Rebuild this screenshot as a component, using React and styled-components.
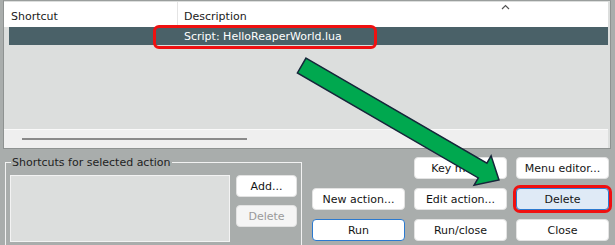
import React from 'react';
import styled, { createGlobalStyle } from 'styled-components';

const Global = createGlobalStyle`
  html, body {
    margin: 0;
    padding: 0;
    background: #a9adac;
    font-family: "DejaVu Sans", Verdana, sans-serif;
    font-size: 11px;
    color: #111;
  }
`;

const Page = styled.div`
  width: 615px;
  height: 245px;
  overflow: hidden;
  position: relative;
  display: flex;
  flex-direction: column;
`;

const ListPanel = styled.div`
  flex-shrink: 0;
  margin: 0 4px 0 3px;
  height: 149px;
  box-sizing: border-box;
  border: 1px solid #8e9291;
  border-top-color: #9a9e9d;
  background: #dcdedd;
  padding: 1px 2px 0 0;
  display: flex;
  flex-direction: column;
`;

const Header = styled.div`
  height: 25px;
  background: #fff;
  display: flex;
  align-items: stretch;
`;

const HeadCell = styled.div`
  position: relative;
  width: ${p => p.$w}px;
  padding-left: ${p => p.$pad}px;
  box-sizing: border-box;
  display: flex;
  align-items: center;
  padding-top: 4px;
  border-right: ${p => (p.$divider ? '1px solid #e4e4e4' : 'none')};
  color: #1a1a1a;
  overflow: hidden;
  white-space: nowrap;
`;

const SortCaret = styled.svg`
  position: absolute;
  top: 2px;
  left: 323px;
  width: 9px;
  height: 6px;
`;

const Row = styled.div`
  margin-left: 5px;
  height: 18px;
  background: #4a6168;
  color: #fff;
  display: flex;
  align-items: center;
`;

const Cell = styled.div`
  position: relative;
  width: ${p => p.$w}px;
  padding-left: ${p => p.$pad || 0}px;
  box-sizing: border-box;
  white-space: nowrap;
`;

const Callout = styled.span`
  position: absolute;
  left: -25px;
  top: -5px;
  width: 224px;
  height: 24px;
  box-sizing: border-box;
  border: 3px solid #f01010;
  border-radius: 6px;
`;

const ListFill = styled.div`
  flex: 1;
`;

const HScroll = styled.div`
  height: 18px;
  border-top: 1px solid #fafafa;
  background: #efefef;
  display: flex;
  align-items: center;
  padding-left: 18px;
`;

const Thumb = styled.div`
  width: 225px;
  height: 2px;
  background: #8a8a8a;
`;

const Bottom = styled.div`
  display: flex;
  align-items: flex-start;
  padding-left: 5px;
`;

const Group = styled.fieldset`
  margin: 7px 0 0 0;
  padding: 6px 4px 20px 4px;
  width: 297px;
  height: 110px;
  box-sizing: border-box;
  border: 1px solid #f2f2f2;
  display: flex;
  gap: 6px;
`;

const Legend = styled.legend`
  padding: 0 1px;
  margin-left: 1px;
  color: #1e1e1e;
  line-height: 13px;
`;

const ShortcutList = styled.div`
  width: 220px;
  height: 67px;
  box-sizing: border-box;
  border: 1px solid #f3f3f3;
  background: #dcdedd;
`;

const SideButtons = styled.div`
  display: flex;
  flex-direction: column;
  gap: 8px;
`;

const Button = styled.button`
  width: ${p => p.$w || 93}px;
  height: 22px;
  box-sizing: border-box;
  border: 1px solid ${p => (p.$focus ? '#2b79cf' : '#e3e3e3')};
  border-radius: 4px;
  background: ${p => (p.$active ? '#dfeaf6' : p.$disabled ? '#f5f5f5' : '#fff')};
  color: ${p => (p.$disabled ? '#9a9a9a' : '#141414')};
  font-family: inherit;
  font-size: 11px;
  padding: 0;
  white-space: nowrap;
  outline: ${p => (p.$flag ? '3px solid #f01010' : 'none')};
  outline-offset: 0;
`;

const ActionGrid = styled.div`
  margin: 8px 0 0 10px;
  display: grid;
  grid-template-columns: repeat(3, 93px);
  grid-auto-rows: 22px;
  column-gap: 9px;
  row-gap: 9px;
`;

const Arrow = styled.svg`
  position: absolute;
  left: 0;
  top: 0;
  width: 615px;
  height: 245px;
  pointer-events: none;
`;

export default function App() {
  return (
    <Page>
      <Global />
      <ListPanel>
        <Header>
          <HeadCell $w={174} $pad={7} $divider>Shortcut</HeadCell>
          <HeadCell $w={430} $pad={6}>
            Description
            <SortCaret viewBox="0 0 9 6">
              <polyline points="1,5 4.5,1.5 8,5" fill="none" stroke="#555" strokeWidth="1.2" />
            </SortCaret>
          </HeadCell>
        </Header>
        <Row>
          <Cell $w={169} />
          <Cell $w={400} $pad={6}>
            Script: HelloReaperWorld.lua
            <Callout />
          </Cell>
        </Row>
        <ListFill />
        <HScroll>
          <Thumb />
        </HScroll>
      </ListPanel>

      <Bottom>
        <Group>
          <Legend>Shortcuts for selected action</Legend>
          <ShortcutList />
          <SideButtons>
            <Button $w={61}>Add...</Button>
            <Button $w={61} $disabled>Delete</Button>
          </SideButtons>
        </Group>
        <ActionGrid>
          <span />
          <Button>Key map...</Button>
          <Button>Menu editor...</Button>
          <Button>New action...</Button>
          <Button>Edit action...</Button>
          <Button $active $focus $flag>Delete</Button>
          <Button $focus>Run</Button>
          <Button>Run/close</Button>
          <Button>Close</Button>
        </ActionGrid>
      </Bottom>

      <Arrow viewBox="0 0 615 245">
        <polygon
          points="306,58.1 486.9,163.1 491.1,155.8 499,180 474.1,185.2 478.3,177.9 297.4,72.9"
          fill="#00a84f"
          stroke="#16263a"
          strokeWidth="1.5"
          strokeLinejoin="miter"
        />
      </Arrow>
    </Page>
  );
}
